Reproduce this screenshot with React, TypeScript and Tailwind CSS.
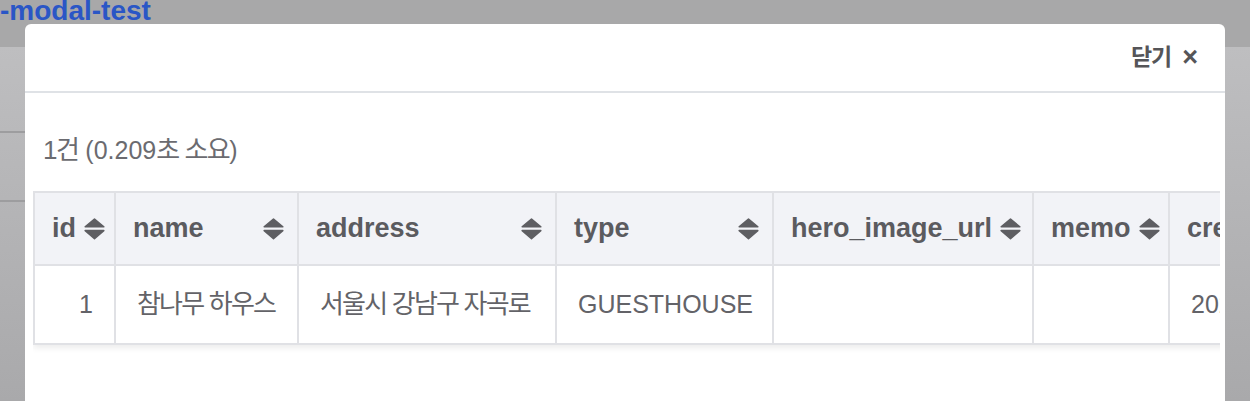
import React from "react";

interface Column {
    label: string;
    width: number;
    value: string;
    align?: "left" | "right";
    korean?: boolean;
}

const COLUMNS: Column[] = [
    { label: "id", width: 81, value: "1", align: "right" },
    { label: "name", width: 183, value: "참나무 하우스", korean: true },
    { label: "address", width: 258, value: "서울시 강남구 자곡로", korean: true },
    { label: "type", width: 217, value: "GUESTHOUSE" },
    { label: "hero_image_url", width: 260, value: "" },
    { label: "memo", width: 136, value: "" },
    { label: "created_at", width: 260, value: "2021-03-12 10:22:31" },
];

function SortIcon() {
    return (
        <svg width="21" height="22" viewBox="0 0 21 22" className="shrink-0">
            <path
                d="M10.5 1.2 L19.8 8.8 H1.2 Z"
                fill="#5e5e62"
                stroke="#5e5e62"
                strokeWidth="1.6"
                strokeLinejoin="round"
            />
            <path
                d="M1.2 12.6 H19.8 L10.5 20.6 Z"
                fill="#5e5e62"
                stroke="#5e5e62"
                strokeWidth="1.6"
                strokeLinejoin="round"
            />
        </svg>
    );
}

export default function App() {
    return (
        <div className="relative h-[404px] w-[1250px] overflow-hidden font-['Liberation_Sans','Noto_Sans_CJK_KR',sans-serif]">
            {/* page behind the overlay */}
            <div className="h-[50px] bg-[#a8a8a9]">
                <div className="w-[220px] border-b-[3px] border-[#2a56c6]">
                    <div className="-mt-[3px] h-[50px] text-[28px] font-bold leading-[28px] text-[#2a56c6]">
                        -modal-test
                    </div>
                </div>
            </div>
            <div className="h-[354px] bg-gradient-to-b from-[#bebec0] to-[#a9a9ab]">
                <div className="h-[84px]" />
                <div className="h-[2px] w-[200px] bg-[#9d9d9f]" />
                <div className="h-[67px]" />
                <div className="h-[2px] w-[200px] bg-[#9d9d9f]" />
            </div>

            {/* modal */}
            <div className="absolute bottom-0 left-[25px] top-[24px] w-[1200px] rounded-t-[6px] bg-white">
                <div className="flex h-[69px] items-center justify-end border-b-2 border-[#dfe2e6] pr-[27px]">
                    <button className="flex items-center gap-[11px] text-[23px] font-bold text-[#555558]">
                        <span className="tracking-[-1px]">닫기</span>
                        <span className="text-[27px] leading-none">×</span>
                    </button>
                </div>

                <div className="pl-[8px] pr-[5px]">
                    <p className="mt-[39px] pl-[10px] text-[25px] leading-[36px] text-[#6b6b70]">
                        <span className="text-[26px] tracking-[-1.5px]">1건</span> (0.209
                        <span className="text-[26px] tracking-[-1.5px]">초 소요</span>)
                    </p>

                    <div className="mt-[23px] overflow-hidden pb-[10px]">
                        <table className="w-[1395px] table-fixed border-collapse shadow-[0_3px_6px_rgba(0,0,0,0.08)]">
                            <colgroup>
                                {COLUMNS.map((col) => (
                                    <col key={col.label} style={{ width: col.width }} />
                                ))}
                            </colgroup>
                            <thead>
                                <tr className="bg-[#f2f3f7]">
                                    {COLUMNS.map((col) => (
                                        <th
                                            key={col.label}
                                            className="border-2 border-[#e0e1e5] py-[18px] pl-[17px] pr-[13px] text-left"
                                        >
                                            <div className="flex items-center justify-between gap-[8px] whitespace-nowrap">
                                                <span className="text-[27px] font-bold leading-[35px] text-[#5b5b5f]">
                                                    {col.label}
                                                </span>
                                                <SortIcon />
                                            </div>
                                        </th>
                                    ))}
                                </tr>
                            </thead>
                            <tbody>
                                <tr className="bg-white">
                                    {COLUMNS.map((col) => (
                                        <td
                                            key={col.label}
                                            className={`overflow-hidden whitespace-nowrap border-2 border-[#e0e1e5] py-[21px] leading-[35px] text-[#636368] ${
                                                col.align === "right" ? "pr-[21px] text-right" : "pl-[21px] text-left"
                                            } ${col.korean ? "text-[26px] tracking-[-1.8px]" : "text-[25px]"}`}
                                        >
                                            {col.value}
                                        </td>
                                    ))}
                                </tr>
                            </tbody>
                        </table>
                    </div>
                </div>
            </div>
        </div>
    );
}
